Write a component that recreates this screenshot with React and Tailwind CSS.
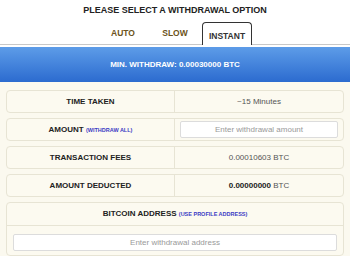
import React, { useState } from 'react';

const font = { fontFamily: '"Liberation Sans", Arial, sans-serif' };

const tabs = ['AUTO', 'SLOW', 'INSTANT'];

const Row = ({ label, children }) => (
  <div className="flex h-[23px] rounded-[4px] border border-[#e7e4d4] bg-[#fcfaf0]">
    <div className="flex w-[168px] items-center justify-center border-r border-[#e7e4d4] text-[8px] font-bold text-[#222]">
      {label}
    </div>
    <div className="flex flex-1 items-center justify-center px-[5px] text-[8px] text-[#555]">
      {children}
    </div>
  </div>
);

export default function App() {
  const [tab, setTab] = useState('INSTANT');

  return (
    <div className="h-[256px] w-[350px] bg-white" style={font}>
      <div className="pt-[5px] text-center text-[9px] font-bold leading-[11px] text-[#222]">
        PLEASE SELECT A WITHDRAWAL OPTION
      </div>

      <div className="mt-[6px] flex h-[23px] justify-center gap-[2px] border-b border-[#c8c8c8]">
        {tabs.map((t) => (
          <button
            key={t}
            onClick={() => setTab(t)}
            className={
              t === tab
                ? 'relative -mb-px w-[50px] rounded-t-[4px] border border-b-0 border-[#333] bg-white pt-[4px] text-[8.5px] font-bold text-[#333]'
                : 'w-[50px] text-[8.5px] font-bold text-[#6b5320]'
            }
          >
            {t}
          </button>
        ))}
      </div>

      <div className="mt-[2px] flex h-[35px] items-center justify-center bg-gradient-to-b from-[#5d9ce8] to-[#2c6bcf] text-[8px] font-bold text-white">
        MIN. WITHDRAW: 0.00030000 BTC
      </div>

      <div className="flex h-[174px] flex-col gap-[5px] bg-[#fbf9ef] px-[6px] pt-[8px]">
        <Row label="TIME TAKEN">~15 Minutes</Row>
        <Row
          label={
            <span>
              AMOUNT{' '}
              <span className="text-[5.5px] text-[#3b3bc4]">(WITHDRAW ALL)</span>
            </span>
          }
        >
          <input
            placeholder="Enter withdrawal amount"
            className="h-[17px] w-full rounded-[2px] border border-[#dcdcdc] bg-white text-center text-[8px] text-[#555] outline-none placeholder:text-[#999]"
          />
        </Row>
        <Row label="TRANSACTION FEES">0.00010603 BTC</Row>
        <Row label="AMOUNT DEDUCTED">
          <span>
            <span className="font-bold text-[#222]">0.00000000</span> BTC
          </span>
        </Row>

        <div className="rounded-[4px] border border-[#e7e4d4] bg-[#fcfaf0] pb-[3px]">
          <div className="flex h-[23px] items-center justify-center border-b border-[#e7e4d4] text-[8px] font-bold text-[#222]">
            BITCOIN ADDRESS&nbsp;
            <span className="text-[5.5px] text-[#3b3bc4]">(USE PROFILE ADDRESS)</span>
          </div>
          <div className="px-[6px] pt-[2px]">
            <input
              placeholder="Enter withdrawal address"
              className="h-[17px] w-full rounded-[2px] border border-[#dcdcdc] bg-white text-center text-[8px] text-[#555] outline-none placeholder:text-[#999]"
            />
          </div>
        </div>
      </div>
    </div>
  );
}
